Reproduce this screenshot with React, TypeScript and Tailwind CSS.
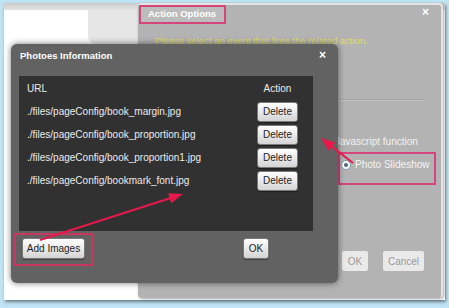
import React from "react";

const FILES = [
  "./files/pageConfig/book_margin.jpg",
  "./files/pageConfig/book_proportion.jpg",
  "./files/pageConfig/book_proportion1.jpg",
  "./files/pageConfig/bookmark_font.jpg",
];

function GreyButton({ label, className = "" }: { label: string; className?: string }) {
  return (
    <div
      className={`flex items-center justify-center rounded-[3px] border border-[#7a7a7a] bg-gradient-to-b from-[#ffffff] to-[#d4d4d4] text-[10px] text-[#1e1e1e] shadow-[0_1px_1px_rgba(0,0,0,0.35)] ${className}`}
    >
      {label}
    </div>
  );
}

function Arrows() {
  return (
    <svg className="absolute left-0 top-0 pointer-events-none" width="449" height="308" viewBox="0 0 449 308">
      {/* Add Images -> list */}
      <line x1="40" y1="240" x2="170" y2="198.3" stroke="#e8184c" strokeWidth="2" />
      <polygon points="183,194 171.2,203.3 168.2,193.3" fill="#e8184c" />
      {/* Photo Slideshow -> dialog */}
      <line x1="353" y1="163" x2="332" y2="146.6" stroke="#e8184c" strokeWidth="2" />
      <polygon points="321,138 335.4,142.4 328.6,150.8" fill="#e8184c" />
    </svg>
  );
}

export default function App() {
  return (
    <div className="relative w-[449px] h-[308px] overflow-hidden bg-[#bfe4f4] pl-[4px] pt-[3px] font-['Liberation_Sans',Arial,sans-serif]">
      {/* Page behind the dialogs */}
      <div className="w-[441px] h-[297px] bg-white shadow-[1px_2px_3px_rgba(0,0,0,0.45)]">
        <div className="h-[7px] bg-gradient-to-b from-[#cbcbcb] to-[#e4e4e4]" />
        <div className="ml-[84px] w-[60px] h-[34px] rounded-bl-[8px] bg-[#e6e6e6]" />
      </div>

      {/* Action Options dialog */}
      <div className="absolute left-[138px] top-[3px] w-[305px] h-[295px] flex flex-col rounded-[4px] border-t-2 border-r-2 border-[#e4e4e4] bg-[#b3b3b3] shadow-[1px_1px_3px_rgba(0,0,0,0.35)]">
        <div className="flex items-start justify-between">
          <div className="ml-[1px] w-[87px] h-[19px] flex items-center border-2 border-[#d4457a] bg-[#bcbcbc] pl-[7px] text-[9.5px] font-bold text-white">
            Action Options
          </div>
          <span className="mr-[12px] mt-[1px] text-[12px] font-bold leading-none text-white">×</span>
        </div>
        <p className="ml-[17px] mt-[11px] text-[9.5px] leading-[12px] text-[#dede66]">
          Please select an event that fires the related action.
        </p>
        <div className="ml-[17px] mr-[17px] mt-[52px] h-[2px] border-t border-b border-t-[#a3a3a3] border-b-[#c2c2c2]" />
        <p className="ml-[197px] mt-[35px] text-[10px] leading-[12px] text-[#f2f2f2]">Javascript function</p>
        <div className="ml-[200px] mt-[4px] w-[98px] h-[33px] border-2 border-[#d4457a] pl-[1px] pt-[5px]">
          <div className="flex items-center gap-[4px]">
            <div className="w-[10px] h-[10px] rounded-full border border-[#7d9cb4] bg-white flex items-center justify-center">
              <div className="w-[4px] h-[4px] rounded-full bg-[#4a6682]" />
            </div>
            <span className="text-[10px] leading-[12px] text-[#f4f4f4]">Photo Slideshow</span>
          </div>
        </div>
        <div className="ml-[204px] mt-[66px] flex gap-[15px]">
          <div className="w-[26px] h-[20px] flex items-center justify-center rounded-[2px] bg-[#e9e9e9] text-[10px] text-[#9a9a9a]">OK</div>
          <div className="w-[41px] h-[20px] flex items-center justify-center rounded-[2px] bg-[#e9e9e9] text-[10px] text-[#9a9a9a]">Cancel</div>
        </div>
      </div>

      {/* Photoes Information dialog */}
      <div className="absolute left-[11px] top-[44px] w-[327px] h-[239px] flex flex-col rounded-[6px] bg-[#626262] shadow-[0_0_6px_rgba(0,0,0,0.55)]">
        <div className="h-[32px] flex items-start justify-between pl-[9px] pt-[6px] pr-[12px]">
          <span className="text-[9.5px] font-bold leading-[11px] text-white">Photoes Information</span>
          <span className="text-[12px] font-bold leading-none text-white -mt-[1px]">×</span>
        </div>
        <div className="ml-[8px] w-[294px] h-[155px] bg-[#313131] flex flex-col pt-[1px]">
          <div className="h-[23px] flex items-center justify-between pl-[8px] pr-[15px] text-[10px] text-[#ececec]">
            <span>URL</span>
            <span className="w-[41px] text-center">Action</span>
          </div>
          {FILES.map((f) => (
            <div key={f} className="h-[23px] flex items-center justify-between pl-[8px] pr-[15px]">
              <span className="text-[10px] text-[#ececec]">{f}</span>
              <GreyButton label="Delete" className="w-[41px] h-[20px]" />
            </div>
          ))}
        </div>
        <div className="mt-[2px] flex items-start">
          <div className="ml-[3px] border-2 border-[#c8375f] px-[6px] pt-[3px] pb-[5px]">
            <GreyButton label="Add Images" className="w-[63px] h-[21px]" />
          </div>
          <GreyButton label="OK" className="ml-[150px] mt-[5px] w-[26px] h-[21px]" />
        </div>
      </div>

      <Arrows />
    </div>
  );
}
